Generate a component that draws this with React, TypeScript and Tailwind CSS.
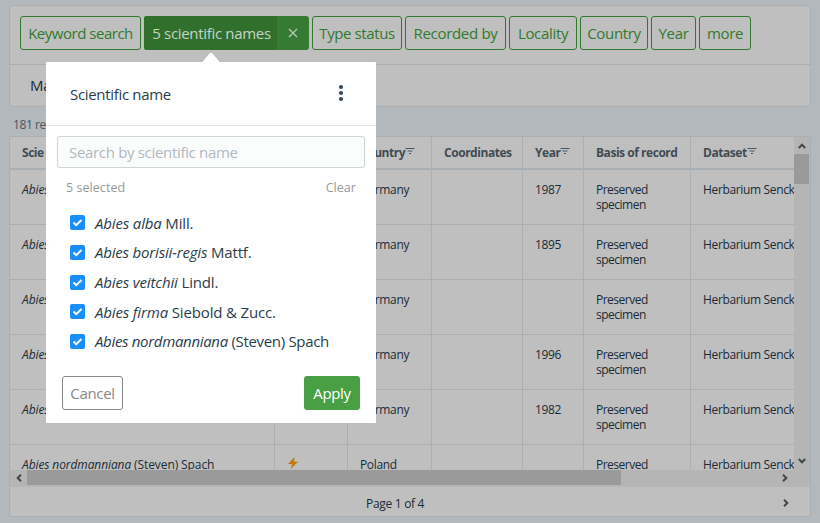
import React from "react";

const filters = [
  { label: "Type status", box: "w-[90px] tracking-[-0.4px]" },
  { label: "Recorded by", box: "w-[101px]" },
  { label: "Locality", box: "w-[68px]" },
  { label: "Country", box: "w-[68px]" },
  { label: "Year", box: "w-[45px]" },
  { label: "more", box: "w-[52px]" },
];

const years = ["1987", "1895", "", "1996", "1982", ""];

const names = [
  { name: "Abies alba", author: "Mill.", spacing: "tracking-[-0.15px]" },
  { name: "Abies borisii-regis", author: "Mattf.", spacing: "tracking-[-0.18px]" },
  { name: "Abies veitchii", author: "Lindl.", spacing: "tracking-[-0.15px]" },
  { name: "Abies firma", author: "Siebold & Zucc.", spacing: "tracking-[-0.15px]" },
  { name: "Abies nordmanniana", author: "(Steven) Spach", spacing: "tracking-[-0.32px]" },
];

const columns = "grid grid-cols-[265px_73px_84px_91px_61px_107px_103px]";
const cell = "border-r border-[#aaafb3] pl-3";

function FilterIcon() {
  return (
    <svg width="10" height="8" viewBox="0 0 10 8" className="mb-[4px] shrink-0" stroke="#4b565f" fill="none">
      <path d="M.5 1.5h9M2.5 4h5M4 6.5h2" />
    </svg>
  );
}

function Chevron({ className }: { className: string }) {
  return (
    <svg width="8" height="8" viewBox="0 0 8 8" className={className} stroke="#42474a" strokeWidth="2" fill="none">
      <path d="M2 .8 5.3 4 2 7.2" />
    </svg>
  );
}

function Heading({ children, icon, last }: { children?: React.ReactNode; icon?: boolean; last?: boolean }) {
  return (
    <div className={`flex items-center whitespace-nowrap pt-px ${last ? "pl-3" : cell}`}>
      {children}
      {icon && <FilterIcon />}
    </div>
  );
}

export default function App() {
  return (
    <div className="relative h-[523px] w-[820px] overflow-hidden bg-[#b3b8bc] px-[9px] pt-[5px] font-['Open_Sans','Noto_Sans',sans-serif] font-[370] text-[#1b2b36]">
      <section className="h-[102px] w-[802px] rounded-[3px] border border-[#aaafb3] bg-[#bfbfbf]">
        <div className="flex h-[59px] gap-[3px] border-b border-[#aaafb3] pl-[10px] pt-[10px] text-[15px] tracking-[-0.32px] text-[#317a2d]">
          <button className="h-[34px] w-[121px] whitespace-nowrap rounded-[3px] border border-[#317a2d] tracking-[-0.48px]">Keyword search</button>
          <div className="flex h-[34px] w-[165px] overflow-hidden rounded-[3px] bg-[#377a33] text-[#c6d3c5]">
            <button className="w-[133px] whitespace-nowrap bg-[#316f2d] pl-[2px]">5 scientific names</button>
            <button className="flex w-8 items-center justify-center">
              <svg width="10" height="10" viewBox="0 0 10 10" stroke="#b9cdb7" strokeWidth="1.2"><path d="m1 1 8 8M9 1 1 9" /></svg>
            </button>
          </div>
          {filters.map((f) => (
            <button key={f.label} className={`h-[34px] whitespace-nowrap rounded-[3px] border border-[#317a2d] ${f.box}`}>{f.label}</button>
          ))}
        </div>
        <div className="pl-[20px] pt-[9px] text-[15px] leading-[22px] tracking-[-0.35px]">Ma</div>
      </section>
      <div className="h-[29px] pl-1 pt-[9px] text-[12px] leading-[18px] tracking-[-0.4px] text-[#4b565f]">181 res</div>
      <section className="h-[381px] w-[802px] overflow-hidden rounded-b-[3px] border border-[#aaafb3] bg-[#bfbfbf] text-[12px] tracking-[-0.35px]">
        <div className="flex h-[333px]">
          <div className="w-[784px] overflow-hidden">
            <div className={`${columns} h-[33px] border-b-2 border-[#aaafb3] font-bold tracking-[-0.46px] text-[#414c54]`}>
              <Heading>Scie</Heading>
              <Heading />
              <Heading icon>Country</Heading>
              <Heading>Coordinates</Heading>
              <Heading icon>Year</Heading>
              <Heading>Basis of record</Heading>
              <Heading icon last>Dataset</Heading>
            </div>
            {years.map((year, i) => (
              <div key={i} className={`${columns} h-[55px] border-b border-[#aaafb3] leading-[15px] [&>*]:pt-3`}>
                <div className={`${cell} whitespace-nowrap tracking-[-0.1px]`}><i>{i === 5 ? "Abies nordmanniana" : "Abies"}</i>{i === 5 ? " (Steven) Spach" : ""}</div>
                <div className={cell}>
                  {i === 5 && <svg width="12" height="12" viewBox="0 0 12 12" fill="#c47a08"><path d="M7.5 0 1 7h4L3.8 12 11 4.7H7Z" /></svg>}
                </div>
                <div className={cell}>{i === 5 ? "Poland" : "Germany"}</div>
                <div className={cell} />
                <div className={cell}>{year}</div>
                <div className={`${cell} tracking-[-0.5px]`}>Preserved<br />specimen</div>
                <div className="whitespace-nowrap pl-3">Herbarium Senck</div>
              </div>
            ))}
          </div>
          <div className="flex w-4 flex-col items-center bg-[#b5b5b5]">
            <div className="flex h-[17px] items-center"><Chevron className="-rotate-90" /></div>
            <div className="mr-px h-[30px] w-[15px] bg-[#9a9a9a]" />
            <div className="mb-[5px] mt-auto"><Chevron className="rotate-90" /></div>
          </div>
        </div>
        <div className="flex h-[17px] bg-[#b5b5b5]">
          <div className="flex h-[15px] w-[17px] items-center justify-center"><Chevron className="rotate-180" /></div>
          <div className="h-[15px] w-[594px] bg-[#9a9a9a]" />
          <div className="ml-auto mr-[21px] flex h-[15px] items-center"><Chevron className="" /></div>
        </div>
        <div className="flex h-[30px] items-center justify-between pl-[356px] pr-5 pt-px">
          <span className="pt-[3px] tracking-[-0.3px]">Page 1 of 4</span>
          <Chevron className="" />
        </div>
      </section>

      <div className="absolute left-[46px] top-[62px] h-[361px] w-[330px] rounded-[1px] bg-white text-[15px] tracking-[-0.32px] text-[#2a3d4c]">
        <svg width="24" height="11" viewBox="0 0 24 11" className="absolute -top-[10px] left-[153px]"><path fill="white" d="M0 11C3 11 4 9 5 8l5.5-6.5q1.5-1.5 3 0L19 8c1 1 2 3 5 3Z" /></svg>
        <header className="flex h-16 items-center justify-between border-b border-[#e0e6e8] pl-6 pr-[32px]">
          <span className="pt-px">Scientific name</span>
          <svg width="6" height="18" viewBox="0 0 6 18" className="mb-px" fill="#354a5b"><circle cx="3" cy="3" r="2.1" /><circle cx="3" cy="9" r="2.1" /><circle cx="3" cy="15" r="2.1" /></svg>
        </header>
        <div className="px-[11px] pt-[10px]">
          <div className="flex h-8 items-center rounded-[3px] border border-[#ccd5d7] bg-[#fbfdfd] pl-[11px] text-[#b1b9bf]">Search by scientific name</div>
        </div>
        <div className="flex justify-between pl-5 pr-5 pt-[11px] text-[12.5px] leading-[18px] tracking-[0.05px] text-[#999]"><span>5 selected</span><span>Clear</span></div>
        <div className="flex flex-col pl-6 pt-[11px]">
          {names.map(({ name, author, spacing }) => (
            <label key={name} className={`flex h-[29.7px] items-center gap-[10px] whitespace-nowrap ${spacing}`}>
              <span className="flex size-[15px] items-center justify-center rounded-[2px] bg-[#188eff]">
                <svg width="11" height="11" viewBox="0 0 11 11" fill="none" stroke="white" strokeWidth="2"><path d="m1.5 5.5 2.7 2.7L9.5 3" /></svg>
              </span>
              <span><i>{name}</i> {author}</span>
            </label>
          ))}
        </div>
        <div className="flex justify-between pl-4 pr-4 pt-[19.5px]">
          <button className="h-[34px] w-[61px] rounded-[3px] border border-[#888] text-[#888]">Cancel</button>
          <button className="h-[34px] w-[56px] rounded-[3px] bg-[#49a044] text-white">Apply</button>
        </div>
      </div>
    </div>
  );
}
